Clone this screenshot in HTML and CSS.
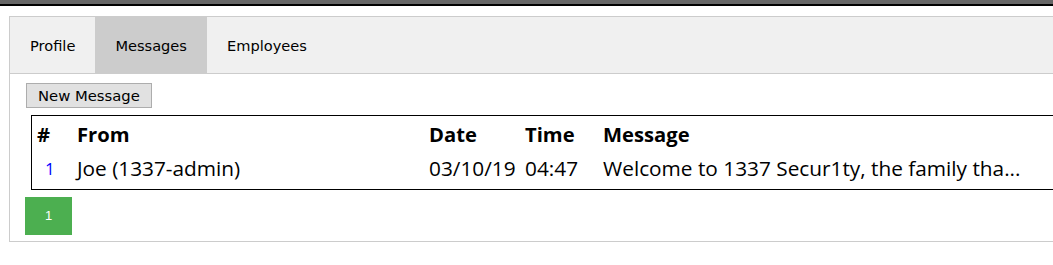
FILE: index.html
```html
<!DOCTYPE html>
<html lang="en">
<head>
    <meta charset="UTF-8">
    <title>Messages</title>
    <link rel="stylesheet" href="styles.css">
</head>
<body>

<div class="topbar"></div>

<div class="panel">
    <div class="tabs">
        <a href="#" class="tab">Profile</a>
        <a href="#" class="tab active">Messages</a>
        <a href="#" class="tab">Employees</a>
    </div>

    <div class="tab-content">
        <button class="new-btn">New Message</button>

        <table class="messages">
            <tr>
                <th class="col-num">#</th>
                <th class="col-from">From</th>
                <th class="col-date">Date</th>
                <th class="col-time">Time</th>
                <th class="col-msg">Message</th>
            </tr>
            <tr>
                <td class="num"><a href="#">1</a></td>
                <td>Joe (1337-admin)</td>
                <td>03/10/19</td>
                <td>04:47</td>
                <td>Welcome to 1337 Secur1ty, the family tha...</td>
            </tr>
        </table>

        <div class="pager">
            <a href="#" class="page active">1</a>
        </div>
    </div>
</div>

</body>
</html>
```

FILE: styles.css
```css
body {
    margin: 0;
    padding: 0;
    background-color: #fff;
    font-family: "DejaVu Sans", Verdana, sans-serif;
    overflow: hidden;
}
.topbar {
    height: 4px;
    background-color: #666;
    border-bottom: 2px solid #000;
}
.panel {
    margin: 10px 0 0 9px;
    width: 1100px;
    border: 1px solid #ccc;
    border-right: none;
}
.tabs {
    display: flex;
    background-color: #f0f0f0;
    border-bottom: 1px solid #ccc;
}
.tab {
    display: block;
    padding: 20px 20px 18px;
    line-height: 18px;
    font-size: 14.6px;
    color: #000;
    text-decoration: none;
}
.tab.active {
    background-color: #ccc;
}
.tab-content {
    padding: 9px 0 6px 16px;
}
.new-btn {
    display: block;
    font-family: "DejaVu Sans", Verdana, sans-serif;
    font-size: 14.8px;
    height: 25px;
    padding: 0 11px;
    background-color: #e1e1e1;
    border: 1px solid #adadad;
    color: #000;
}
.messages {
    margin: 7px 0 0 5px;
    width: 1060px;
    border: 1px solid #000;
    border-spacing: 0;
    table-layout: fixed;
    padding-bottom: 4px;
    font-family: "Open Sans", "Noto Sans", sans-serif;
    font-size: 20.8px;
    color: #000;
}
.messages th {
    text-align: left;
    height: 35px;
    padding: 0 0 0 5px;
    font-weight: bold;
    font-size: 20.2px;
}
.messages td {
    height: 34px;
    padding: 0 0 0 5px;
    white-space: nowrap;
}
.col-num { width: 35px; }
.col-from { width: 347px; }
.col-date { width: 91px; }
.col-time { width: 73px; }
.messages td.num {
    padding-left: 13px;
    font-size: 17px;
}
.messages td.num a {
    color: #00f;
    text-decoration: none;
}
.pager {
    display: flex;
    margin: 7px 0 0 -1px;
}
.page {
    display: block;
    width: 47px;
    height: 38px;
    line-height: 38px;
    text-align: center;
    font-family: "Liberation Sans", Arial, sans-serif;
    font-size: 13px;
    color: #fff;
    text-decoration: none;
}
.page.active {
    background-color: #4caf50;
}
```
